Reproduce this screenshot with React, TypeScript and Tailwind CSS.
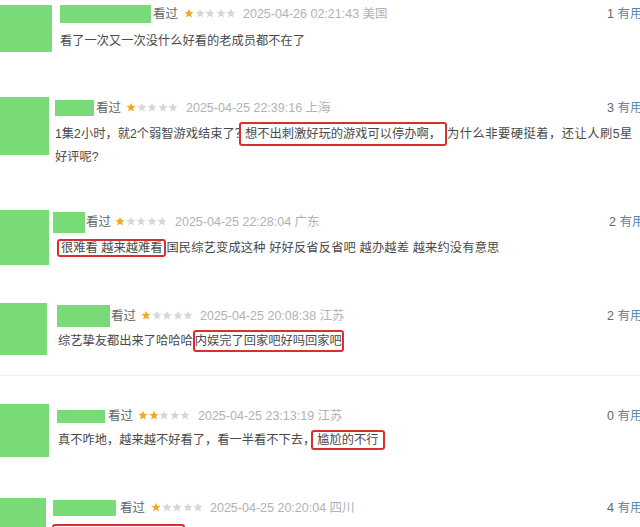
import React from "react";

const FONT = { fontFamily: '"Liberation Sans", "Noto Sans CJK SC", sans-serif' };

function Stars({ n }: { n: number }) {
  return (
    <span className="inline-flex items-center gap-[0.5px]">
      {[0, 1, 2, 3, 4].map((i) => (
        <svg key={i} width="10" height="10" viewBox="0 0 24 24">
          <polygon
            points="12,1.5 15,8.8 23,9.4 17,14.6 18.9,22.5 12,18.3 5.1,22.5 7,14.6 1,9.4 9,8.8"
            fill={i < n ? "#f5a623" : "#d6d6d6"}
          />
        </svg>
      ))}
    </span>
  );
}

function Box({ children, cls }: { children: React.ReactNode; cls: string }) {
  return <span className={cls}>{children}</span>;
}

export default function App() {
  const green = "bg-[#79da78]";
  return (
    <div className="w-[640px] h-[527px] overflow-hidden bg-white relative" style={FONT}>
      {/* Row 1 */}
      <div className="w-[647px] h-[92px] flex items-start">
        <div className={`mt-[5px] w-[52px] h-[47px] shrink-0 ${green}`} />
        <div className="ml-[8px] mt-[5px] flex-1 flex flex-col">
          <div className="h-[18px] flex items-center text-[12.5px] whitespace-nowrap">
            <div className={`w-[91px] h-[18px] ${green}`} />
            <span className="ml-[2px] text-[#666]">看过</span>
            <span className="ml-[6px]"><Stars n={1} /></span>
            <span className="ml-[7px] text-[#b2b2b2]">2025-04-26 02:21:43 美国</span>
            <span className="ml-auto w-[40px] shrink-0 text-[#666]">1 <span className="text-[#5b87b0]">有用</span></span>
          </div>
          <div className="mt-[9px] leading-[18px] text-[12.25px] text-[#494949] whitespace-nowrap">
            看了一次又一次没什么好看的老成员都不在了
          </div>
        </div>
      </div>

      {/* Row 2 */}
      <div className="w-[647px] h-[108px] flex items-start">
        <div className={`mt-[5px] w-[49px] h-[58px] shrink-0 ${green}`} />
        <div className="ml-[6px] mt-[8px] flex-1 flex flex-col">
          <div className="h-[16px] flex items-center text-[12.5px] whitespace-nowrap">
            <div className={`w-[39px] h-[16px] ${green}`} />
            <span className="ml-[2px] text-[#666]">看过</span>
            <span className="ml-[5px]"><Stars n={1} /></span>
            <span className="ml-[8px] text-[#b2b2b2]">2025-04-25 22:39:16 上海</span>
            <span className="ml-auto w-[40px] shrink-0 text-[#666]">3 <span className="text-[#5b87b0]">有用</span></span>
          </div>
          <div className="mt-[7px] leading-[23px] text-[12.25px] text-[#494949] whitespace-nowrap">
            <div>
              1集2小时，就2个弱智游戏结束了？
              <Box cls="ml-[-8px] border-2 border-[#d8312d] rounded-[3px] px-[4px] py-[3px]">想不出刺激好玩的游戏可以停办啊，</Box>
              <span className="tracking-[0.5px]">为什么非要硬挺着，还让人刷5星</span>
            </div>
            <div>好评呢?</div>
          </div>
        </div>
      </div>

      {/* Row 3 */}
      <div className="w-[647px] h-[90px] flex items-start">
        <div className={`mt-[10px] w-[49px] h-[55px] shrink-0 ${green}`} />
        <div className="ml-[4px] mt-[12px] flex-1 flex flex-col">
          <div className="h-[21px] flex items-center text-[12.5px] whitespace-nowrap">
            <div className={`w-[32px] h-[21px] ${green}`} />
            <span className="ml-[1px] text-[#666]">看过</span>
            <span className="ml-[4px]"><Stars n={1} /></span>
            <span className="ml-[8px] text-[#b2b2b2]">2025-04-25 22:28:04 广东</span>
            <span className="ml-auto mr-[-2px] w-[40px] shrink-0 text-[#666]">2 <span className="text-[#5b87b0]">有用</span></span>
          </div>
          <div className="mt-[5px] pl-[4px] leading-[20px] text-[12.25px] text-[#494949] whitespace-nowrap">
            <Box cls="border-2 border-[#d8312d] rounded-[3px] px-[2px] py-[0px]">很难看 越来越难看</Box>
            <span className="tracking-[0.15px]">国民综艺变成这种 好好反省反省吧 越办越差 越来约没有意思</span>
          </div>
        </div>
      </div>

      {/* Row 4 */}
      <div className="w-[647px] h-[86px] flex items-start border-b border-[#f0f0f0]">
        <div className={`mt-[13px] w-[47px] h-[52px] shrink-0 ${green}`} />
        <div className="ml-[10px] mt-[15px] flex-1 flex flex-col">
          <div className="h-[22px] flex items-center text-[12.5px] whitespace-nowrap">
            <div className={`w-[53px] h-[22px] ${green}`} />
            <span className="ml-[1px] text-[#666]">看过</span>
            <span className="ml-[5px]"><Stars n={1} /></span>
            <span className="ml-[7px] text-[#b2b2b2]">2025-04-25 20:08:38 江苏</span>
            <span className="ml-auto w-[40px] shrink-0 text-[#666]">2 <span className="text-[#5b87b0]">有用</span></span>
          </div>
          <div className="mt-[3px] pl-[1px] leading-[22px] text-[12.25px] text-[#494949] whitespace-nowrap">
            综艺挚友都出来了哈哈哈
            <Box cls="border-2 border-[#d8312d] rounded-[3px] px-[0px] py-[2px]">内娱完了回家吧好吗回家吧</Box>
          </div>
        </div>
      </div>

      {/* Row 5 */}
      <div className="w-[647px] h-[114px] flex items-start">
        <div className={`mt-[28px] w-[49px] h-[53px] shrink-0 ${green}`} />
        <div className="ml-[8px] mt-[34px] flex-1 flex flex-col">
          <div className="h-[13px] flex items-center text-[12.5px] whitespace-nowrap">
            <div className={`w-[48px] h-[13px] ${green}`} />
            <span className="ml-[3px] text-[#666]">看过</span>
            <span className="ml-[5px]"><Stars n={2} /></span>
            <span className="ml-[8px] text-[#b2b2b2]">2025-04-25 23:13:19 江苏</span>
            <span className="ml-auto w-[40px] shrink-0 text-[#666]">0 <span className="text-[#5b87b0]">有用</span></span>
          </div>
          <div className="mt-[7px] pl-[1px] leading-[20px] text-[12.25px] text-[#494949] whitespace-nowrap">
            真不咋地，越来越不好看了，看一半看不下去，
            <Box cls="ml-[-4px] border-2 border-[#d8312d] rounded-[3px] px-[4px] py-[1px]">尴尬的不行</Box>
          </div>
        </div>
      </div>

      {/* Row 6 */}
      <div className="w-[647px] h-[60px] flex items-start">
        <div className={`mt-[8px] w-[46px] h-[40px] shrink-0 ${green}`} />
        <div className="ml-[7px] mt-[10px] flex-1 flex flex-col">
          <div className="h-[16px] flex items-center text-[12.5px] whitespace-nowrap">
            <div className={`w-[63px] h-[16px] ${green}`} />
            <span className="ml-[4px] text-[#666]">看过</span>
            <span className="ml-[6px]"><Stars n={1} /></span>
            <span className="ml-[7px] text-[#b2b2b2]">2025-04-25 20:20:04 四川</span>
            <span className="ml-auto w-[40px] shrink-0 text-[#666]">4 <span className="text-[#5b87b0]">有用</span></span>
          </div>
          <div className="mt-[8px] ml-[-1px] w-[133px] h-[24px] border-2 border-[#d8312d] rounded-[3px]" />
        </div>
      </div>
    </div>
  );
}
